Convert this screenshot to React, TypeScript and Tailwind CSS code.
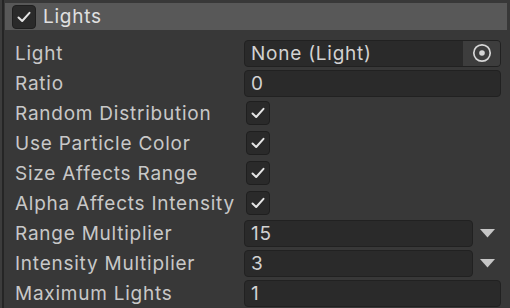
import React from 'react';

type Row =
  | { label: string; kind: 'object'; value: string }
  | { label: string; kind: 'text'; value: string; dropdown?: boolean }
  | { label: string; kind: 'check'; checked: boolean };

const rows: Row[] = [
  { label: 'Light', kind: 'object', value: 'None (Light)' },
  { label: 'Ratio', kind: 'text', value: '0' },
  { label: 'Random Distribution', kind: 'check', checked: true },
  { label: 'Use Particle Color', kind: 'check', checked: true },
  { label: 'Size Affects Range', kind: 'check', checked: true },
  { label: 'Alpha Affects Intensity', kind: 'check', checked: true },
  { label: 'Range Multiplier', kind: 'text', value: '15', dropdown: true },
  { label: 'Intensity Multiplier', kind: 'text', value: '3', dropdown: true },
  { label: 'Maximum Lights', kind: 'text', value: '1' },
];

function Check({ size = 24 }: { size?: number }) {
  return (
    <div
      className="flex items-center justify-center rounded-[4px] border border-[#1f1f1f] bg-[#2a2a2a]"
      style={{ width: size, height: size }}
    >
      <svg width="16" height="16" viewBox="0 0 16 16" fill="none">
        <path d="M2.5 8.5 L6.2 12 L13.5 3.8" stroke="#e4e4e4" strokeWidth="2" strokeLinecap="round" strokeLinejoin="round" />
      </svg>
    </div>
  );
}

function Field({ children }: { children: React.ReactNode }) {
  return (
    <div className="flex h-[27px] flex-1 items-center overflow-hidden rounded-[4px] border border-[#212121] bg-[#2a2a2a] pl-[6px] text-[#d2d2d2]">
      {children}
    </div>
  );
}

export default function App() {
  return (
    <div className="flex h-[308px] w-[510px] bg-[#383838] font-['Inter','Noto_Sans',sans-serif] text-[19px] leading-none tracking-[0.04em]">
      <div className="w-[2px] bg-[#3c3c3c]" />
      <div className="w-[2px] bg-[#252525]" />
      <div className="flex flex-1 flex-col">
        <div className="ml-[1px] mr-[3px] mt-[3px] flex h-[28px] items-center gap-[7px] bg-[#585858] pl-[7px] text-[#e0e0e0]">
          <Check size={24} />
          <span className="text-[19px]">Lights</span>
        </div>
        <div className="mt-[8px] flex flex-col">
          {rows.map((r) => (
            <div key={r.label} className="flex h-[30px] items-center">
              <div className="w-[240px] whitespace-nowrap pl-[11px] text-[#c8c8c8]">{r.label}</div>
              {r.kind === 'check' && (
                <div className="pl-[2px]">
                  <Check size={24} />
                </div>
              )}
              {r.kind === 'object' && (
                <div className="mr-[9px] flex flex-1">
                  <Field>
                    <span className="flex-1">{r.value}</span>
                    <div className="flex h-full w-[37px] items-center justify-center bg-[#3d3d3d]">
                      <svg width="20" height="20" viewBox="0 0 20 20" fill="none">
                        <circle cx="10" cy="10" r="8.2" stroke="#d6d6d6" strokeWidth="1.7" />
                        <circle cx="10" cy="10" r="2.8" fill="#d6d6d6" />
                      </svg>
                    </div>
                  </Field>
                </div>
              )}
              {r.kind === 'text' && (
                <div className="mr-[9px] flex flex-1 items-center">
                  <Field>{r.value}</Field>
                  {r.dropdown && (
                    <div className="flex w-[28px] justify-center">
                      <svg width="15" height="9" viewBox="0 0 15 9">
                        <path d="M0 0 H15 L7.5 8.5 Z" fill="#c6c6c6" />
                      </svg>
                    </div>
                  )}
                </div>
              )}
            </div>
          ))}
        </div>
      </div>
    </div>
  );
}
